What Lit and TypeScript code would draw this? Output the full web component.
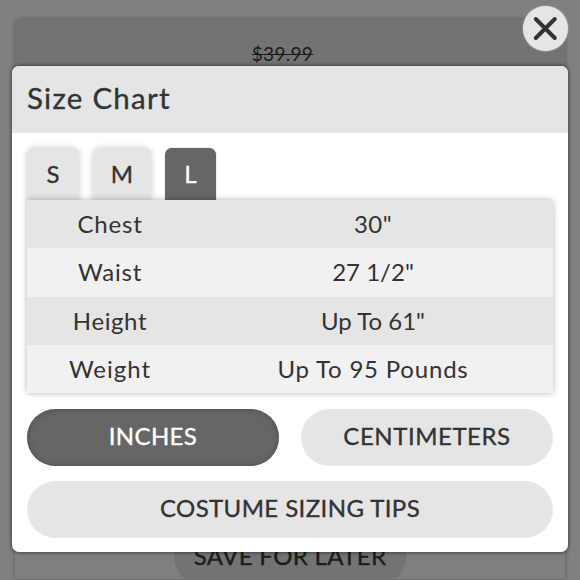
import { LitElement, html, css } from "lit";
import { customElement, property, state } from "lit/decorators.js";
import { classMap } from "lit/directives/class-map.js";
import { styleMap } from "lit/directives/style-map.js";

interface Row {
  label: string;
  value: string;
  labelTracking: number;
  valueTracking: number;
}

const ROWS: Row[] = [
  { label: "Chest", value: '30"', labelTracking: 0.8, valueTracking: 0.4 },
  { label: "Waist", value: '27 1/2"', labelTracking: 0.8, valueTracking: 0 },
  { label: "Height", value: 'Up To 61"', labelTracking: 0.6, valueTracking: 0 },
  { label: "Weight", value: "Up To 95 Pounds", labelTracking: 1, valueTracking: 0.8 },
];

@customElement("size-table")
class SizeTable extends LitElement {
  static styles = css`
    :host {
      display: block;
      border-radius: 0 4px 0 0;
      box-shadow: 0 0 6px rgba(0, 0, 0, 0.3);
    }

    .row {
      display: grid;
      grid-template-columns: 166px 1fr;
      height: 48.35px;
      line-height: 47px;
      text-align: center;
      background: #f1f1f1;
    }
    .row:nth-child(odd) {
      background: #e5e5e5;
    }
    .row:first-child {
      border-radius: 0 4px 0 0;
    }
  `;

  @property({ attribute: false }) rows: Row[] = [];

  render() {
    return this.rows.map(
      (row) => html`<div class="row">
        <span style=${styleMap({ letterSpacing: `${row.labelTracking}px` })}>${row.label}</span>
        <span style=${styleMap({ letterSpacing: `${row.valueTracking}px` })}>${row.value}</span>
      </div>`
    );
  }
}

@customElement("app-root")
export class AppRoot extends LitElement {
  static styles = css`
    :host {
      display: block;
      position: relative;
      box-sizing: border-box;
      width: 580px;
      height: 580px;
      padding: 19px 15px 0;
      overflow: hidden;
      background: #808080;
      color: #333;
      font-family: Lato, "Open Sans", sans-serif;
      font-size: 24px;
    }

    /* product page behind the dialog */
    .product {
      display: flex;
      flex-direction: column;
      align-items: center;
      justify-content: space-between;
      height: 560px;
      border-radius: 7px 7px 0 0;
      box-shadow: 0 0 5px rgba(0, 0, 0, 0.3);
      background: linear-gradient(#737373 110px, #7f7f7f 110px);
      color: #1c1c1c;
    }
    .price {
      margin-top: 23px;
      margin-right: 15px;
      font-size: 19px;
      letter-spacing: 0.3px;
      line-height: 24px;
      text-decoration: line-through;
    }
    .save {
      box-sizing: border-box;
      flex: none;
      width: 232px;
      height: 57px;
      margin-bottom: -6px;
      border-radius: 29px;
      background: #737373;
      letter-spacing: 0.35px;
      line-height: 55px;
      text-align: center;
    }

    .dialog {
      position: absolute;
      top: 66px;
      left: 12px;
      width: 556px;
      height: 486px;
      border-radius: 7px;
      overflow: hidden;
      background: #fff;
      box-shadow: 0 0 4px rgba(0, 0, 0, 0.65);
    }
    .title {
      height: 66.5px;
      padding-left: 15px;
      background: #e5e5e5;
      font-size: 29.5px;
      letter-spacing: 1.25px;
      line-height: 63px;
    }
    .content {
      padding: 15px;
    }

    .tabs {
      display: flex;
      gap: 14px;
    }
    .tab {
      width: 52px;
      height: 52.5px;
      border-radius: 7px 7px 0 0;
      background: #e5e5e5;
      box-shadow: 0 0 6px rgba(0, 0, 0, 0.22);
      line-height: 51px;
      text-align: center;
      cursor: pointer;
    }
    .tab.medium {
      width: 58px;
    }
    .tab.large {
      width: 51px;
    }
    .tab.active {
      background: #666;
      color: #fff;
      box-shadow: 0 0 1px #666;
    }
    size-table {
      position: relative;
    }

    .actions {
      display: grid;
      grid-template-columns: 1fr 1fr;
      gap: 15px 22px;
      padding-top: 15.5px;
    }
    .button {
      height: 57px;
      border-radius: 29px;
      background: #e5e5e5;
      box-shadow: inset 0 0 3px #eee;
      line-height: 53px;
      text-align: center;
      cursor: pointer;
    }
    .button.active {
      background: #666;
      color: #fff;
      box-shadow: inset 0 0 6px #505050;
    }
    .button.wide {
      grid-column: 1 / -1;
      letter-spacing: 0.4px;
    }
    .medium-weight {
      -webkit-text-stroke: 0.35px currentColor;
    }

    .close {
      position: absolute;
      top: 6px;
      left: 523px;
      width: 45px;
      height: 45px;
      border-radius: 50%;
      background: #e5e5e5;
      box-shadow: 0 0 2px #c8c8d0;
    }
    .close svg {
      display: block;
    }
  `;

  @state() private size = "L";
  @state() private unit = "inches";

  private renderTab(size: string) {
    const classes = {
      tab: true,
      "medium-weight": true,
      medium: size === "M",
      large: size === "L",
      active: size === this.size,
    };
    return html`<div class=${classMap(classes)} @click=${() => (this.size = size)}>${size}</div>`;
  }

  private renderUnit(unit: string, tracking: number) {
    const classes = { button: true, "medium-weight": true, active: unit === this.unit };
    return html`<div
      class=${classMap(classes)}
      style=${styleMap({ letterSpacing: `${tracking}px` })}
      @click=${() => (this.unit = unit)}
    >${unit.toUpperCase()}</div>`;
  }

  render() {
    return html`
      <div class="product">
        <div class="price">$39.99</div>
        <div class="save medium-weight">SAVE FOR LATER</div>
      </div>
      <div class="dialog">
        <div class="title medium-weight">Size Chart</div>
        <div class="content">
          <div class="tabs">${["S", "M", "L"].map((size) => this.renderTab(size))}</div>
          <size-table .rows=${ROWS}></size-table>
          <div class="actions">
            ${this.renderUnit("inches", 0.35)} ${this.renderUnit("centimeters", 0.55)}
            <div class="button wide medium-weight">COSTUME SIZING TIPS</div>
          </div>
        </div>
      </div>
      <div class="close">
        <svg width="45" height="45" viewBox="0 0 45 45" fill="none" stroke="#333" stroke-width="4" stroke-linecap="round">
          <path d="M12.8 13L31.8 32M31.8 13L12.8 32" />
        </svg>
      </div>
    `;
  }
}
